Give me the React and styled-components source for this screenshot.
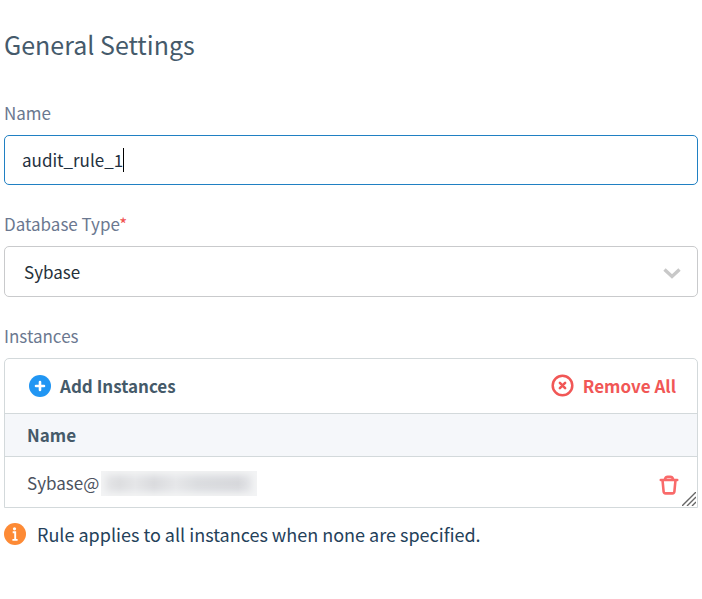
import { useState } from "react";
import styled, { createGlobalStyle } from "styled-components";

const GlobalStyle = createGlobalStyle`
  * {
    box-sizing: border-box;
  }
  body {
    margin: 0;
    background: #fff;
  }
  body, input, select, button {
    font-family: "Noto Sans CJK SC", "Noto Sans", sans-serif;
    font-size: 17px;
    line-height: 24px;
  }
`;

const Page = styled.main`
  padding: 26px 4px;
`;

const Title = styled.h1`
  margin: 0 0 39px;
  font-size: 25px;
  line-height: 36px;
  font-weight: 400;
  color: #455a6b;
`;

const Field = styled.div`
  display: flex;
  flex-direction: column;
  gap: 10px;
  margin-bottom: 27px;
`;

const Label = styled.label`
  color: #6b7890;
`;

const Required = styled.span`
  color: #f0524f;
`;

const InputBox = styled.div`
  display: flex;
  align-items: center;
  height: 50px;
  padding: 0 17px;
  border: 1px solid #2080c3;
  border-radius: 5px;
`;

const Input = styled.input`
  field-sizing: content;
  min-width: 1px;
  max-width: 100%;
  padding: 0;
  border: none;
  outline: none;
  background: none;
  color: #1f3140;
  caret-color: transparent;
`;

const Caret = styled.span`
  width: 1px;
  height: 24px;
  background: #000;
`;

const SelectBox = styled.div`
  position: relative;
  display: flex;
`;

const Select = styled.select`
  appearance: none;
  width: 100%;
  height: 51px;
  padding: 0 48px 0 19px;
  border: 1px solid #c9cacc;
  border-radius: 5px;
  outline: none;
  background: #fff;
  color: #26313a;
`;

const Chevron = styled.svg`
  position: absolute;
  top: 21px;
  right: 17px;
  pointer-events: none;
`;

const Panel = styled.div`
  position: relative;
  border: 1px solid #d3d9db;
  border-radius: 5px 5px 0 0;
`;

const Toolbar = styled.div`
  display: flex;
  align-items: center;
  justify-content: space-between;
  height: 54px;
  padding: 0 21px 0 23px;
`;

const ToolButton = styled.button`
  display: flex;
  align-items: center;
  gap: 8px;
  padding: 0;
  border: none;
  background: none;
  font-weight: 700;
  color: ${({ $danger }) => ($danger ? "#f15756" : "#455a69")};
  cursor: pointer;
`;

const Table = styled.table`
  width: 100%;
  border-collapse: collapse;
`;

const HeadCell = styled.th`
  height: 43px;
  padding: 0 22px;
  border-top: 1px solid #d3d9db;
  border-bottom: 1px solid #d3d9db;
  background: #f5f7fa;
  text-align: left;
  font-weight: 700;
  color: #455a69;
`;

const Cell = styled.td`
  height: 50px;
  padding: 3px ${({ $actions }) => ($actions ? 18 : 22)}px 0;
  color: #4c525e;
`;

const Instance = styled.div`
  display: flex;
  align-items: center;
  gap: 2px;
`;

const Redacted = styled.span`
  width: 156px;
  height: 25px;
  background: linear-gradient(
    90deg,
    #e6e7e9,
    #dddee0 12%,
    #e5e6e8 22%,
    #dadbde 34%,
    #e6e7e9 48%,
    #dbdde0 62%,
    #d7d8dc 88%,
    #ebecee
  );
  box-shadow: inset 0 0 7px 4px #f3f4f5;
`;

const IconButton = styled.button`
  display: block;
  margin-left: auto;
  padding: 3px 0 0;
  border: none;
  background: none;
  line-height: 0;
  cursor: pointer;
`;

const Grip = styled.svg`
  position: absolute;
  right: 1px;
  bottom: 1px;
`;

const Note = styled.p`
  display: flex;
  align-items: center;
  gap: 11px;
  margin: 4px 0 0;
  font-size: 18px;
  color: #24415a;
`;

const AddIcon = () => (
  <svg width="24" height="24" viewBox="0 0 24 24" aria-hidden="true">
    <circle cx="12" cy="12" r="11" fill="#2196f3" />
    <path
      d="M12 8v8M8 12h8"
      stroke="#fff"
      strokeWidth="2.6"
      strokeLinecap="round"
    />
  </svg>
);

const RemoveIcon = () => (
  <svg width="24" height="24" viewBox="0 0 24 24" fill="none" aria-hidden="true">
    <circle cx="11.5" cy="11.5" r="9.8" stroke="#f15756" strokeWidth="2.5" />
    <path
      d="M8.9 8.9l5.2 5.2M14.1 8.9l-5.2 5.2"
      stroke="#f15756"
      strokeWidth="2.6"
      strokeLinecap="round"
    />
  </svg>
);

const TrashIcon = () => (
  <svg
    width="20"
    height="22"
    viewBox="0 0 20 22"
    fill="none"
    stroke="#f96a6a"
    strokeWidth="2.6"
    strokeLinecap="round"
    strokeLinejoin="round"
    aria-hidden="true"
  >
    <path d="M1.8 6h16.4" />
    <path d="M6 5.2c.5-1.7 1.3-2.3 2.6-2.3h2.8c1.3 0 2.1.6 2.6 2.3" />
    <path d="M3.6 7l1 10.5c.1 1.3.8 1.9 2 1.9h6.8c1.2 0 1.9-.6 2-1.9L16.4 7" />
  </svg>
);

const InfoIcon = () => (
  <svg width="22" height="22" viewBox="0 0 22 22" aria-hidden="true">
    <circle cx="11" cy="11" r="11" fill="#fd8a35" />
    <circle cx="10.5" cy="5.8" r="1.6" fill="#fff" />
    <path
      d="M8.7 9.2h2.5v7.5M8.4 16.9h5.2"
      fill="none"
      stroke="#fff"
      strokeWidth="1.9"
    />
  </svg>
);

const databaseTypes = ["Sybase", "Oracle", "MySQL", "PostgreSQL"];

const App = () => {
  const [name, setName] = useState("audit_rule_1");
  const [dbType, setDbType] = useState("Sybase");
  const [instances, setInstances] = useState([{ id: 1, prefix: "Sybase@" }]);

  const addInstance = () => {
    setInstances((prev) => [...prev, { id: Date.now(), prefix: `${dbType}@` }]);
  };

  const removeInstance = (id) => {
    setInstances((prev) => prev.filter((instance) => instance.id !== id));
  };

  return (
    <>
      <GlobalStyle />
      <Page>
        <Title>General Settings</Title>

        <Field>
          <Label htmlFor="name">Name</Label>
          <InputBox>
            <Input
              id="name"
              type="text"
              value={name}
              spellCheck={false}
              onChange={(e) => setName(e.target.value)}
            />
            <Caret />
          </InputBox>
        </Field>

        <Field>
          <Label htmlFor="dbType">
            Database Type<Required>*</Required>
          </Label>
          <SelectBox>
            <Select
              id="dbType"
              value={dbType}
              onChange={(e) => setDbType(e.target.value)}
            >
              {databaseTypes.map((type) => (
                <option key={type}>{type}</option>
              ))}
            </Select>
            <Chevron width="18" height="12" viewBox="0 0 18 12" fill="none">
              <path d="M1.5 2.5L9 9.5l7.5-7" stroke="#c8c8c8" strokeWidth="3.4" />
            </Chevron>
          </SelectBox>
        </Field>

        <Field>
          <Label as="span" id="instances">
            Instances
          </Label>
          <Panel>
            <Toolbar>
              <ToolButton type="button" onClick={addInstance}>
                <AddIcon /> Add Instances
              </ToolButton>
              <ToolButton
                type="button"
                $danger
                onClick={() => setInstances([])}
              >
                <RemoveIcon /> Remove All
              </ToolButton>
            </Toolbar>
            <Table aria-labelledby="instances">
              <thead>
                <tr>
                  <HeadCell colSpan={2}>Name</HeadCell>
                </tr>
              </thead>
              <tbody>
                {instances.map((instance) => (
                  <tr key={instance.id}>
                    <Cell>
                      <Instance>
                        {instance.prefix}
                        <Redacted />
                      </Instance>
                    </Cell>
                    <Cell $actions>
                      <IconButton
                        type="button"
                        aria-label="Remove instance"
                        onClick={() => removeInstance(instance.id)}
                      >
                        <TrashIcon />
                      </IconButton>
                    </Cell>
                  </tr>
                ))}
              </tbody>
            </Table>
            <Grip width="14" height="14" viewBox="0 0 14 14" aria-hidden="true">
              <path
                d="M0 14L14 0M5 14l9-9M10 14l4-4"
                stroke="#666"
                strokeWidth="1.4"
              />
            </Grip>
          </Panel>
          <Note>
            <InfoIcon /> Rule applies to all instances when none are specified.
          </Note>
        </Field>
      </Page>
    </>
  );
};

export default App;
